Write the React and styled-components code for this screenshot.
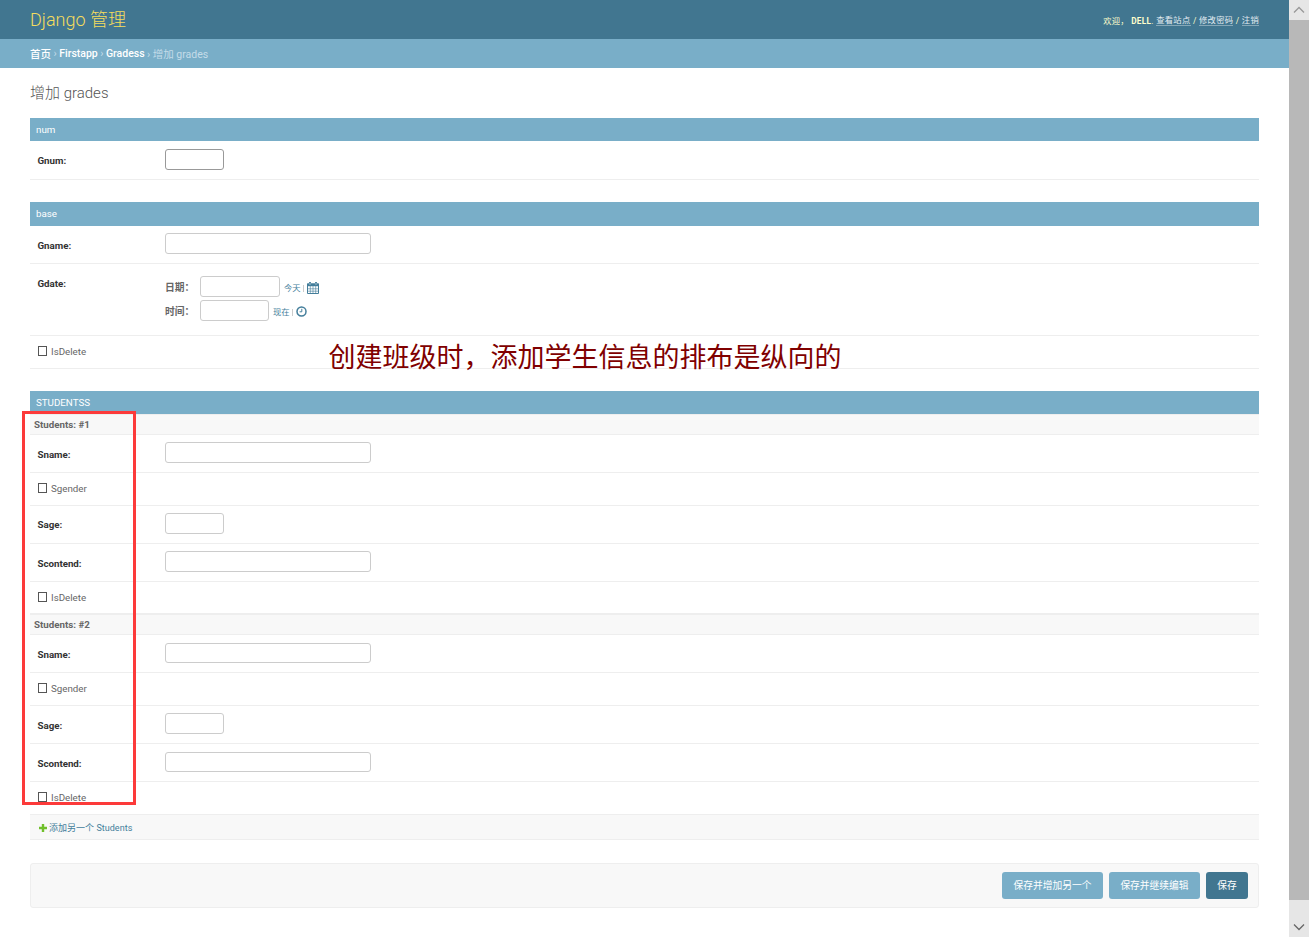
import React from "react";
import styled, { createGlobalStyle } from "styled-components";

const GlobalStyle = createGlobalStyle`
  * { box-sizing: border-box; }
  body {
    margin: 0;
    background: #fff;
    color: #333;
    font-family: Roboto, "Noto Sans CJK SC", sans-serif;
    font-size: 9.75px;
    overflow: hidden;
  }
`;

const Screen = styled.div`
  position: relative;
  display: flex;
  width: 1309px;
  height: 937px;
  overflow: hidden;
`;

const Page = styled.div`
  flex: 1;
  min-width: 0;
  display: flex;
  flex-direction: column;
`;

const Header = styled.header`
  height: 39px;
  flex: none;
  padding: 0 30px;
  display: flex;
  align-items: center;
  justify-content: space-between;
  background: #417690;
  color: #ffc;
`;

const SiteName = styled.h1`
  margin: 0;
  font-size: 18px;
  line-height: 38px;
  font-weight: 300;
  color: #f5dd5d;
`;

const UserTools = styled.div`
  display: flex;
  align-items: center;
  padding-top: 2px;
  font-size: 8.25px;
  line-height: 12px;
  white-space: pre;
  letter-spacing: 0.3px;
`;

const ToolLink = styled.a`
  color: #e3edf2;
  border-bottom: 1px solid #86a8b8;
  line-height: 9px;
  letter-spacing: 0.35px;
`;

const Crumbs = styled.nav`
  height: 29px;
  flex: none;
  padding: 0 30px 1px;
  display: flex;
  align-items: center;
  background: #79aec8;
  color: #c4dce8;
  font-size: 10.5px;
  letter-spacing: -0.02px;
  white-space: pre;
`;

const Crumb = styled.a`
  color: #fff;
  font-weight: 500;
`;

const Content = styled.main`
  padding: 0 30px;
  display: flex;
  flex-direction: column;
`;

const Title = styled.h2`
  margin: 0;
  height: 50px;
  line-height: 50px;
  font-size: 15px;
  font-weight: 300;
  color: #555;
`;

const Module = styled.section`
  margin-bottom: ${(p) => p.$gap ?? 22}px;
`;

const ModuleHead = styled.h3`
  margin: 0;
  height: ${(p) => p.$h || 23}px;
  line-height: ${(p) => p.$h || 23}px;
  padding-left: 6px;
  background: #79aec8;
  color: #fff;
  font-size: 9.75px;
  font-weight: 400;
`;

const Row = styled.div`
  height: ${(p) => p.$h || 38}px;
  display: flex;
  align-items: flex-start;
  padding-left: 7.5px;
  border-bottom: 1px solid #eee;
`;

const Label = styled.label`
  width: 127.5px;
  flex: none;
  margin-top: ${(p) => p.$top || 13}px;
  line-height: 13px;
  font-weight: 700;
  letter-spacing: -0.03px;
`;

const Input = styled.input.attrs({ type: "text" })`
  appearance: none;
  outline: none;
  width: ${(p) => p.$w}px;
  height: ${(p) => p.$h || 21}px;
  margin: ${(p) => p.$top || 0}px 0 0;
  padding: 0 4px;
  border: 1px solid ${(p) => (p.$focus ? "#999" : "#ccc")};
  border-radius: 3px;
  background: #fff;
`;

const CheckLabel = styled.label`
  display: flex;
  align-items: flex-start;
  gap: 4px;
  padding: 9px 0 0 0.5px;
  color: #666;
  line-height: 13px;
`;

const Check = styled.input.attrs({ type: "checkbox" })`
  appearance: none;
  width: 9px;
  height: 10px;
  margin: 1px 0 0;
  border: 1px solid #555;
  background: #fff;
`;

const DateTime = styled.div`
  display: flex;
  flex-direction: column;
  gap: 3px;
  padding-top: 12px;
`;

const DateLine = styled.div`
  display: flex;
  align-items: center;
  height: 21px;
`;

const DateLabel = styled.span`
  width: 35px;
  color: #666;
  font-weight: 700;
`;

const Shortcut = styled.a`
  margin-left: 4px;
  color: #447e9b;
  font-size: 8.25px;
  line-height: 12px;
  padding-top: 2px;
`;

const Bar = styled.i`
  width: 1px;
  height: 7px;
  margin: 3px 3px 0 2px;
  background: #ccc;
`;

const Glyph = styled.svg`
  display: block;
  flex: none;
  margin-top: ${(p) => p.$top || 0}px;
`;

const InlineHead = styled.h4`
  margin: 0;
  height: 21px;
  padding-left: 4px;
  line-height: 20px;
  border-top: 1px solid #eee;
  border-bottom: 1px solid #eee;
  background: #f8f8f8;
  color: #666;
  font-size: 9.75px;
  font-weight: 700;
`;

const AddRow = styled.div`
  height: 25px;
  display: flex;
  align-items: center;
  gap: 2px;
  padding: 1px 0 0 9px;
  background: #f8f8f8;
  border-bottom: 1px solid #eee;
  color: #447e9b;
  font-size: 9px;
  letter-spacing: 0.03px;
`;

const SubmitRow = styled.div`
  height: 45px;
  display: flex;
  justify-content: flex-end;
  gap: 6px;
  padding: 8px 10px 0 0;
  background: #f8f8f8;
  border: 1px solid #eee;
  border-radius: 3px;
`;

const Button = styled.button`
  width: ${(p) => p.$w}px;
  height: 27px;
  padding: 0;
  border: 0;
  border-radius: 3px;
  background: ${(p) => (p.$primary ? "#417690" : "#79aec8")};
  color: #fff;
  font-family: inherit;
  font-size: 9.75px;
  line-height: 27px;
  white-space: nowrap;
`;

const ScrollBar = styled.aside`
  width: 20px;
  flex: none;
  display: flex;
  flex-direction: column;
  background: #e6e6e6;
`;

const ScrollEnd = styled.div`
  height: ${(p) => p.$h}px;
  display: flex;
  justify-content: center;
  padding-top: ${(p) => p.$top}px;
`;

const Thumb = styled.div`
  height: 880px;
  background: #b8b8b8;
`;

const RedFrame = styled.div`
  position: absolute;
  left: 22px;
  top: 411px;
  width: 114px;
  height: 394px;
  border: 3px solid #fc3a3a;
`;

const Note = styled.div`
  position: absolute;
  left: 328.5px;
  top: 338px;
  color: #800000;
  font-size: 27px;
  line-height: 40px;
  white-space: nowrap;
`;

function CheckRow({ name, h = 33 }) {
  return (
    <Row $h={h}>
      <CheckLabel>
        <Check />
        {name}
      </CheckLabel>
    </Row>
  );
}

function TextRow({ name, w = 206, h, top = 7, inputH, labelTop, focus }) {
  return (
    <Row $h={h}>
      <Label $top={labelTop}>{name}:</Label>
      <Input $w={w} $top={top} $h={inputH} $focus={focus} />
    </Row>
  );
}

function Student({ index, short }) {
  const inputH = short ? 20 : 21;
  const top = short ? 8 : 7;
  return (
    <>
      <InlineHead>Students: #{index}</InlineHead>
      <TextRow name="Sname" top={top} inputH={inputH} />
      <CheckRow name="Sgender" />
      <TextRow name="Sage" w={59} labelTop={short ? 13 : 12} />
      <TextRow name="Scontend" top={top} inputH={inputH} />
      <CheckRow name="IsDelete" h={short ? 33 : 32} />
    </>
  );
}

function Calendar() {
  return (
    <Glyph width="12" height="12" viewBox="0 0 12 12" $top={3}>
      <path d="M0.5 2h11v9.5h-11z" fill="#fff" stroke="#447e9b" />
      <path d="M0 1.5h12v2.7H0z" fill="#447e9b" />
      <path d="M3 0v3M9 0v3" stroke="#447e9b" strokeWidth="2" />
      <path d="M3 .7v2.2M9 .7v2.2" stroke="#fff" strokeWidth=".6" />
      <path d="M3.3 4v7.5M6 4v7.5M8.7 4v7.5M.5 6.8h11M.5 9.2h11" stroke="#447e9b" strokeWidth=".6" />
    </Glyph>
  );
}

function Clock() {
  return (
    <Glyph width="11" height="11" viewBox="0 0 11 11" $top={2}>
      <circle cx="5.5" cy="5.5" r="4.5" fill="#fff" stroke="#447e9b" strokeWidth="1.5" />
      <path d="M5.8 2.8v3H3.6" fill="none" stroke="#447e9b" strokeWidth="1" />
    </Glyph>
  );
}

export default function App() {
  return (
    <Screen>
      <GlobalStyle />
      <Page>
        <Header>
          <SiteName>Django 管理</SiteName>
          <UserTools>
            欢迎， <b>DELL</b>. <ToolLink>查看站点</ToolLink> / <ToolLink>修改密码</ToolLink> / <ToolLink>注销</ToolLink>
          </UserTools>
        </Header>
        <Crumbs>
          <Crumb>首页</Crumb> › <Crumb>Firstapp</Crumb> › <Crumb>Gradess</Crumb> › 增加 grades
        </Crumbs>
        <Content>
          <Title>增加 grades</Title>
          <Module>
            <ModuleHead>num</ModuleHead>
            <TextRow name="Gnum" w={59} h={39} top={8} focus />
          </Module>
          <Module>
            <ModuleHead $h={24}>base</ModuleHead>
            <TextRow name="Gname" />
            <Row $h={72}>
              <Label>Gdate:</Label>
              <DateTime>
                <DateLine>
                  <DateLabel>日期：</DateLabel>
                  <Input $w={80} />
                  <Shortcut>今天</Shortcut>
                  <Bar />
                  <Calendar />
                </DateLine>
                <DateLine>
                  <DateLabel>时间：</DateLabel>
                  <Input $w={69} />
                  <Shortcut>现在</Shortcut>
                  <Bar />
                  <Clock />
                </DateLine>
              </DateTime>
            </Row>
            <CheckRow name="IsDelete" />
          </Module>
          <Module $gap={23}>
            <ModuleHead>STUDENTSS</ModuleHead>
            <Student index={1} />
            <Student index={2} short />
            <AddRow>
              <Glyph width="8" height="8" viewBox="0 0 8 8" $top={1}>
                <path d="M4 0v8M0 4h8" stroke="#70bf2b" strokeWidth="2.4" />
              </Glyph>
              添加另一个 Students
            </AddRow>
          </Module>
          <SubmitRow>
            <Button $w={101}>保存并增加另一个</Button>
            <Button $w={91}>保存并继续编辑</Button>
            <Button $w={42} $primary>保存</Button>
          </SubmitRow>
        </Content>
      </Page>
      <ScrollBar>
        <ScrollEnd $h={20} $top={6}>
          <svg width="12" height="8" viewBox="0 0 12 8">
            <path d="M1 6.5l5-5 5 5" fill="none" stroke="#999" strokeWidth="1.3" />
          </svg>
        </ScrollEnd>
        <Thumb />
        <ScrollEnd $h={37} $top={23}>
          <svg width="12" height="8" viewBox="0 0 12 8">
            <path d="M1 1.5l5 5 5-5" fill="none" stroke="#666" strokeWidth="1.3" />
          </svg>
        </ScrollEnd>
      </ScrollBar>
      <Note>创建班级时，添加学生信息的排布是纵向的</Note>
      <RedFrame />
    </Screen>
  );
}
